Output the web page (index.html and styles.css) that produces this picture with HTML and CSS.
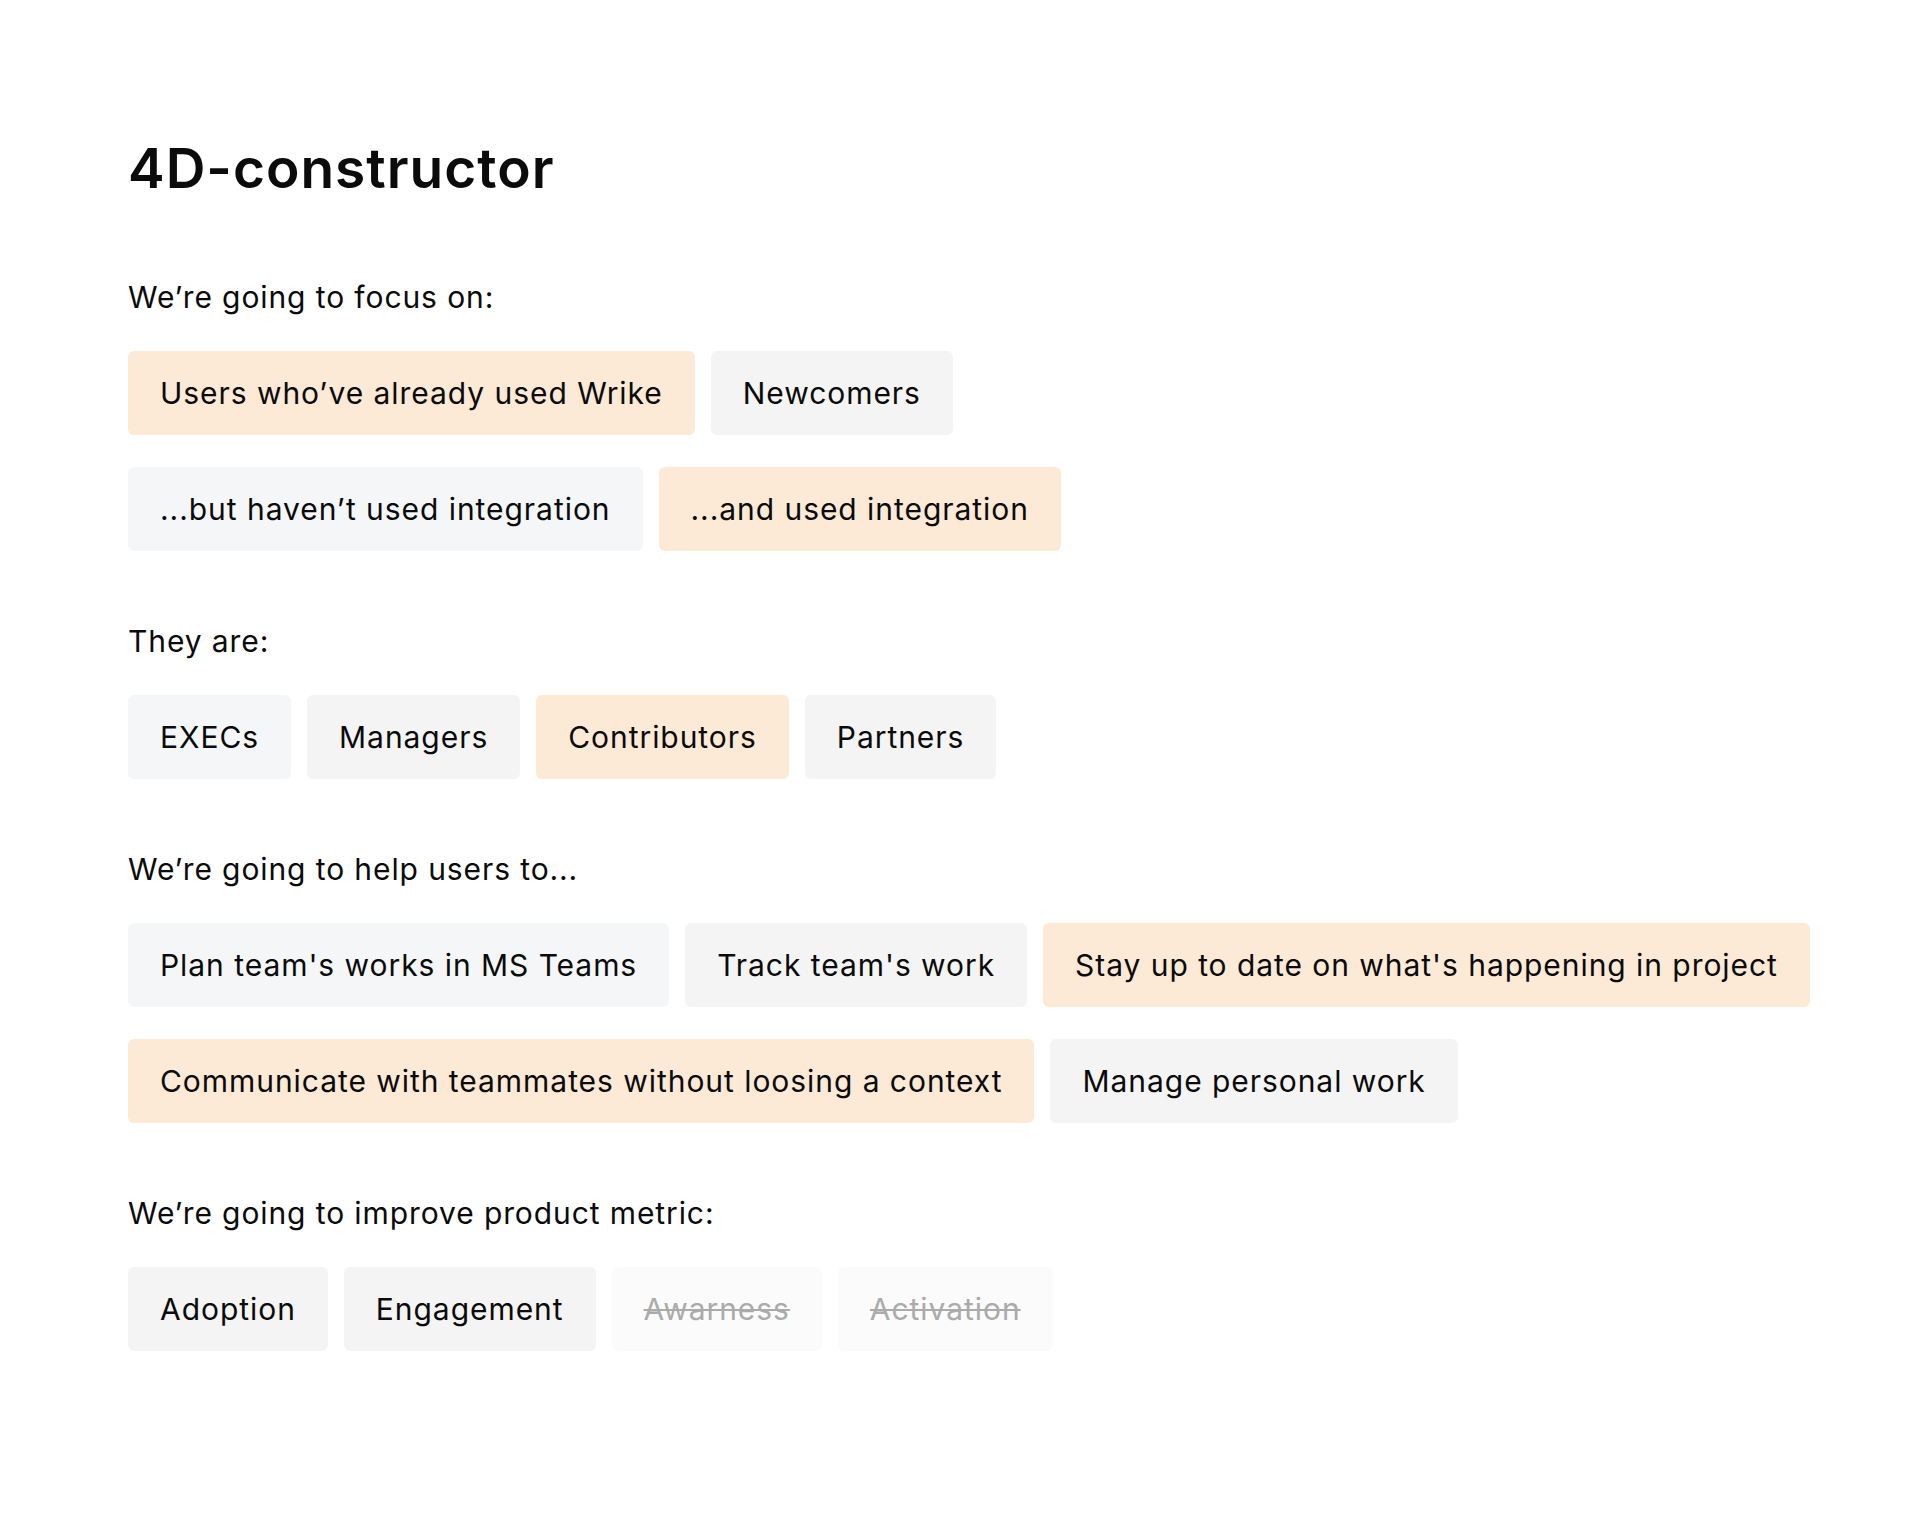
FILE: index.html
```html
<!DOCTYPE html>
<html lang="en">
<head>
<meta charset="utf-8">
<title>4D-constructor</title>
<link rel="stylesheet" href="styles.css">
</head>
<body>
<main class="page">
  <h1 class="title">4D-constructor</h1>

  <section class="section">
    <p class="label">We’re going to focus on:</p>
    <div class="rows">
      <div class="chips">
        <span class="chip chip--accent">Users who’ve already used Wrike</span>
        <span class="chip chip--gray">Newcomers</span>
      </div>
      <div class="chips">
        <span class="chip chip--cool">...but haven’t used integration</span>
        <span class="chip chip--accent">...and used integration</span>
      </div>
    </div>
  </section>

  <section class="section">
    <p class="label">They are:</p>
    <div class="rows">
      <div class="chips">
        <span class="chip chip--cool">EXECs</span>
        <span class="chip chip--gray">Managers</span>
        <span class="chip chip--accent">Contributors</span>
        <span class="chip chip--gray">Partners</span>
      </div>
    </div>
  </section>

  <section class="section">
    <p class="label">We’re going to help users to...</p>
    <div class="rows">
      <div class="chips">
        <span class="chip chip--cool">Plan team's works in MS Teams</span>
        <span class="chip chip--gray">Track team's work</span>
        <span class="chip chip--accent">Stay up to date on what's happening in project</span>
      </div>
      <div class="chips">
        <span class="chip chip--accent">Communicate with teammates without loosing a context</span>
        <span class="chip chip--gray">Manage personal work</span>
      </div>
    </div>
  </section>

  <section class="section">
    <p class="label">We’re going to improve product metric:</p>
    <div class="rows">
      <div class="chips">
        <span class="chip chip--gray">Adoption</span>
        <span class="chip chip--gray">Engagement</span>
        <span class="chip chip--off">Awarness</span>
        <span class="chip chip--off">Activation</span>
      </div>
    </div>
  </section>
</main>
</body>
</html>
```

FILE: styles.css
```css
html, body {
  margin: 0;
  padding: 0;
  background: #ffffff;
}

body {
  font-family: Inter, "Noto Sans", "Liberation Sans", sans-serif;
  color: #0b0b0b;
}

.page {
  padding: 137px 128px 120px 128px;
  display: flex;
  flex-direction: column;
  gap: 72px;
}

.title {
  margin: 0 0 8px 0;
  font-size: 55px;
  line-height: 62px;
  font-weight: 600;
  letter-spacing: 1px;
}

.section {
  display: flex;
  flex-direction: column;
  gap: 36px;
}

.label {
  margin: 0;
  font-size: 30px;
  line-height: 36px;
  font-weight: 400;
  letter-spacing: 0.9px;
}

.rows {
  display: flex;
  flex-direction: column;
  gap: 32px;
}

.chips {
  display: flex;
  gap: 16px;
}

.chip {
  display: inline-flex;
  align-items: center;
  height: 84px;
  box-sizing: border-box;
  padding: 0 32px;
  border-radius: 6px;
  font-size: 30px;
  line-height: 36px;
  letter-spacing: 0.95px;
  white-space: nowrap;
}

.chip--accent {
  background: #fce9d6;
}

.chip--gray {
  background: #f4f4f4;
}

.chip--cool {
  background: #f5f6f8;
}

.chip--off {
  background: #fbfbfb;
  color: #ababab;
  text-decoration: line-through;
  text-decoration-thickness: 2px;
}
```
